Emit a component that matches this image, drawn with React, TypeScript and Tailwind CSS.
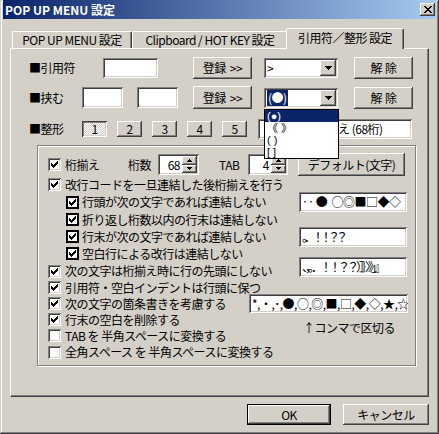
import React from "react";

const RAISED =
  "bg-[#d4d0c8] shadow-[inset_-1px_-1px_#404040,inset_1px_1px_#ffffff,inset_-2px_-2px_#808080,inset_2px_2px_#d4d0c8]";
const SUNKEN =
  "bg-white shadow-[inset_1px_1px_#808080,inset_-1px_-1px_#ffffff,inset_2px_2px_#404040,inset_-2px_-2px_#d4d0c8]";

type Kids = { className?: string; children?: React.ReactNode };

function Btn({ className = "", children }: Kids) {
  return (
    <div className={`${RAISED} flex flex-none items-center justify-center leading-[14px] whitespace-pre ${className}`}>
      {children}
    </div>
  );
}

function Field({ className = "", children }: Kids) {
  return (
    <div className={`${SUNKEN} flex flex-none items-center overflow-hidden whitespace-pre pl-[3px] leading-[14px] ${className}`}>
      {children}
    </div>
  );
}

function CheckMark() {
  return (
    <svg width="7" height="7" viewBox="0 0 7 7" className="block">
      {[2, 3, 4, 3, 2, 1, 0].map((y, x) => (
        <rect key={x} x={x} y={y} width="1" height="3" fill="#000" />
      ))}
    </svg>
  );
}

function Check({ checked = true, flat = false }: { checked?: boolean; flat?: boolean }) {
  if (flat)
    return (
      <span className="w-[13px] h-[13px] flex-none border-2 border-black bg-white flex items-center justify-center">
        {checked && <CheckMark />}
      </span>
    );
  return (
    <span className={`${SUNKEN} w-[13px] h-[13px] flex-none flex items-center justify-center`}>
      {checked && <CheckMark />}
    </span>
  );
}

function CheckRow({
  className = "",
  sub = false,
  checked = true,
  children,
  extra,
}: Kids & { sub?: boolean; checked?: boolean; extra?: React.ReactNode }) {
  return (
    <div className={`flex items-center ${sub ? "pl-[28px]" : "pl-[10px]"} ${className}`}>
      <Check checked={checked} flat={sub} />
      <span className={`${sub ? "ml-[3px]" : "ml-[4px]"} leading-[14px] whitespace-pre`}>{children}</span>
      {extra}
    </div>
  );
}

function DownArrow() {
  return (
    <svg width="7" height="4" viewBox="0 0 7 4" className="block">
      <path d="M0 0h7v1h-1v1h-1v1h-1v1h-1v-1h-1v-1h-1v-1h-1z" fill="#000" />
    </svg>
  );
}

const LIST_ITEM =
  "h-[12px] leading-[12px] text-[11px] pl-[2px] whitespace-pre overflow-hidden font-['Liberation_Sans','Noto_Sans_CJK_JP',sans-serif] tracking-normal";

function Combo({ className = "", children, open = false }: Kids & { open?: boolean }) {
  return (
    <div className={`relative w-[74px] h-[20px] flex-none ${SUNKEN} flex items-center p-[2px] ${className}`}>
      <div className="flex-1 h-full flex items-center pl-[1px] leading-[14px]">{children}</div>
      <div className={`${RAISED} w-[16px] h-[16px] flex items-center justify-center`}>
        <DownArrow />
      </div>
      {open && (
        <div className="absolute left-0 top-[21px] w-[75px] h-[50px] bg-white border border-black z-20 flex flex-col">
          <div className={`${LIST_ITEM} bg-[#0a246a] text-white`}>(●)</div>
          <div className={LIST_ITEM}>《 》</div>
          <div className={LIST_ITEM}>( )</div>
          <div className={LIST_ITEM}>[ ]</div>
        </div>
      )}
    </div>
  );
}

function Spin({ className = "", value }: { className?: string; value: string }) {
  return (
    <div className={`${SUNKEN} flex flex-none p-[2px] ${className}`}>
      <div className="flex-1 flex items-center justify-end pr-[2px] leading-[14px]">{value}</div>
      <div className="w-[15px] flex flex-col">
        <div className={`${RAISED} flex-1 flex items-center justify-center`}>
          <svg width="5" height="3" viewBox="0 0 5 3" className="block">
            <path d="M2 0h1v1h1v1h1v1H0V2h1V1h1z" fill="#000" />
          </svg>
        </div>
        <div className={`${RAISED} flex-1 flex items-center justify-center`}>
          <svg width="5" height="3" viewBox="0 0 5 3" className="block">
            <path d="M0 0h5v1H4v1H3v1H2V2H1V1H0z" fill="#000" />
          </svg>
        </div>
      </div>
    </div>
  );
}

function CloseGlyph() {
  const rows = [
    [0, 1, 6, 7],
    [1, 2, 5, 6],
    [2, 3, 4, 5],
    [3, 4],
    [2, 3, 4, 5],
    [1, 2, 5, 6],
    [0, 1, 6, 7],
  ];
  return (
    <svg width="8" height="7" viewBox="0 0 8 7" className="block">
      {rows.flatMap((xs, y) => xs.map((x) => <rect key={`${x}-${y}`} x={x} y={y} width="1" height="1" fill="#000" />))}
    </svg>
  );
}

export default function App() {
  return (
    <div className="w-[439px] h-[434px] bg-[#d4d0c8] px-[3px] pb-[3px] flex flex-col text-[12px] tracking-[-0.5px] text-black font-['Noto_Sans_CJK_JP',sans-serif] shadow-[inset_-1px_-1px_#404040,inset_1px_1px_#d4d0c8,inset_-2px_-2px_#808080,inset_2px_2px_#ffffff] overflow-hidden">
      {/* title bar */}
      <div className="h-[19px] flex-none flex items-center bg-linear-to-r/srgb from-[#0a246a] to-[#a6caf0] pl-[2px] pr-[1px]">
        <span className="text-white font-bold leading-[14px] tracking-normal">POP UP MENU 設定</span>
        <div className={`${RAISED} ml-auto w-[15px] h-[13px] flex items-center justify-center`}>
          <CloseGlyph />
        </div>
      </div>

      <div className="mt-[9px] ml-[7px] w-[419px] flex flex-col">
        {/* tabs */}
        <div className="flex items-end h-[20px] pl-[2px]">
          <div className="w-[120px] h-[17px] flex items-center justify-center border-l border-t border-white border-r border-r-[#404040] rounded-t-[2px] shadow-[inset_-1px_0_#808080] leading-[14px] whitespace-pre">
            POP UP MENU 設定
          </div>
          <div className="w-[156px] h-[17px] flex items-center justify-center border-l border-t border-white border-r border-r-[#404040] rounded-t-[2px] shadow-[inset_-1px_0_#808080] leading-[14px] whitespace-pre">
            Clipboard / HOT KEY 設定
          </div>
          <div className="relative z-10 -ml-[2px] -mb-px w-[118px] h-[21px] bg-[#d4d0c8] flex items-start justify-center pt-[2px] border-l border-t border-white border-r border-r-[#404040] rounded-t-[2px] shadow-[inset_-1px_0_#808080] leading-[14px] whitespace-pre">
            引用符／整形 設定
          </div>
        </div>

        {/* panel */}
        <div className="h-[349px] flex flex-col pt-[8px] border-t border-l border-white border-r border-b border-r-[#404040] border-b-[#404040] shadow-[inset_-1px_-1px_#808080]">
          <div className="flex items-center h-[22px] pl-[18px]">
            <span className="w-[74px] leading-[14px]">■引用符</span>
            <Field className="w-[55px] h-[20px]" />
            <Btn className="ml-[35px] w-[59px] h-[22px]">
              登録<span className="ml-[4px]">&gt;&gt;</span>
            </Btn>
            <Combo className="ml-[12px]">&gt;</Combo>
            <Btn className="ml-[16px] w-[59px] h-[22px]">
              解<span className="ml-[3px]">除</span>
            </Btn>
          </div>

          <div className="flex items-center h-[23px] mt-[7px] pl-[18px]">
            <span className="w-[53px] leading-[14px]">■挟む</span>
            <Field className="w-[41px] h-[21px]" />
            <Field className="ml-[14px] w-[41px] h-[21px]" />
            <Btn className="ml-[15px] w-[59px] h-[23px]">
              登録<span className="ml-[4px]">&gt;&gt;</span>
            </Btn>
            <Combo className="ml-[12px]" open>
              <span className="bg-[#0a246a] text-white h-[16px] leading-[16px] px-[1px] whitespace-pre">(●)</span>
            </Combo>
            <Btn className="ml-[16px] w-[59px] h-[22px]">
              解<span className="ml-[3px]">除</span>
            </Btn>
          </div>

          <div className="flex items-center h-[21px] mt-[9px] pl-[18px]">
            <span className="w-[53px] leading-[14px]">■整形</span>
            <div className="w-[25px] h-[16px] flex items-center justify-center leading-[14px] bg-[repeating-conic-gradient(#ffffff_0%_25%,#d4d0c8_0%_50%)] bg-size-[2px_2px] shadow-[inset_1px_1px_#404040,inset_-1px_-1px_#ffffff,inset_2px_2px_#808080,inset_-2px_-2px_#d4d0c8]">
              1
            </div>
            <Btn className="ml-[10px] w-[25px] h-[16px]">2</Btn>
            <Btn className="ml-[10px] w-[25px] h-[16px]">3</Btn>
            <Btn className="ml-[10px] w-[25px] h-[16px]">4</Btn>
            <Btn className="ml-[10px] w-[25px] h-[16px]">5</Btn>
            <Field className="ml-[11px] w-[154px] h-[20px]">
              <span className="ml-[8px]">整形１：桁揃え (68桁)</span>
            </Field>
          </div>

          {/* group box */}
          <div className="mt-[6px] ml-[26px] w-[379px] h-[221px] flex flex-col pt-[7px] border border-[#808080] shadow-[inset_1px_1px_#ffffff,1px_1px_#ffffff]">
            <div className="flex items-center h-[23px] pl-[10px]">
              <Check />
              <span className="ml-[4px] w-[63px] leading-[14px]">桁揃え</span>
              <span className="w-[30px] leading-[14px]">桁数</span>
              <Spin className="w-[41px] h-[21px]" value="68" />
              <span className="ml-[20px] w-[29px] leading-[14px]">TAB</span>
              <Spin className="w-[40px] h-[21px]" value="4" />
              <Btn className="ml-[10px] w-[107px] h-[23px]">デフォルト(文字)</Btn>
            </div>

            <CheckRow className="h-[17px]">改行コードを一旦連結した後桁揃えを行う</CheckRow>
            <CheckRow
              sub
              className="h-[18px]"
              extra={<Field className="ml-auto mr-[8px] w-[108px] h-[20px]">‥ ●  ○◎■□◆◇</Field>}
            >
              行頭が次の文字であれば連結しない
            </CheckRow>
            <CheckRow sub className="h-[17px]">
              折り返し桁数以内の行末は連結しない
            </CheckRow>
            <CheckRow
              sub
              className="h-[17px]"
              extra={
                <Field className="ml-auto mr-[8px] w-[108px] h-[20px]">
                  <span className="tracking-[-4px]">。．！！？？</span>
                </Field>
              }
            >
              行末が次の文字であれば連結しない
            </CheckRow>
            <CheckRow sub className="h-[17px]">
              空白行による改行は連結しない
            </CheckRow>
            <CheckRow
              className="h-[18px]"
              extra={
                <Field className="ml-auto mr-[8px] mb-[8px] w-[108px] h-[20px]">
                  <span className="tracking-[-3px]">、，。．！！？？）］｝〉》」』</span>
                </Field>
              }
            >
              次の文字は桁揃え時に行の先頭にしない
            </CheckRow>
            <CheckRow className="h-[15px]">引用符・空白インデントは行頭に保つ</CheckRow>
            <CheckRow
              className="h-[17px]"
              extra={<Field className="ml-auto mr-[7px] w-[159px] h-[19px]">*,・,･,●,○,◎,■,□,◆,◇,★,☆</Field>}
            >
              次の文字の箇条書きを考慮する
            </CheckRow>
            <div className="flex items-center">
              <div className="flex flex-col">
                <CheckRow className="h-[15px]">行末の空白を削除する</CheckRow>
                <CheckRow className="h-[17px]" checked={false}>
                  TAB を 半角スペースに変換する
                </CheckRow>
              </div>
              <span className="ml-auto mr-[20px] leading-[14px]">↑コンマで区切る</span>
            </div>
            <CheckRow className="h-[16px]" checked={false}>
              全角スペース を 半角スペースに変換する
            </CheckRow>
          </div>
        </div>

        {/* dialog buttons */}
        <div className="flex justify-end mt-[7px]">
          <Btn className="w-[84px] h-[21px] border border-black">OK</Btn>
          <Btn className="ml-[12px] w-[86px] h-[21px]">キャンセル</Btn>
        </div>
      </div>
    </div>
  );
}
